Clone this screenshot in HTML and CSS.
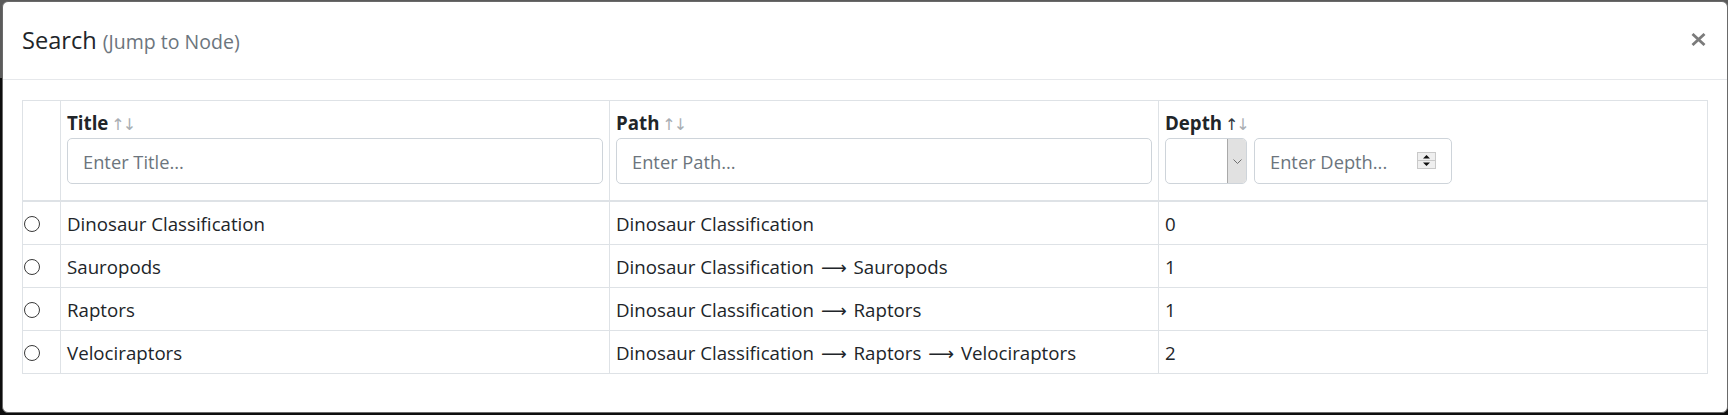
FILE: index.html
```html
<!DOCTYPE html>
<html lang="en">
<head>
<meta charset="utf-8">
<title>Search (Jump to Node)</title>
<link rel="stylesheet" href="styles.css">
</head>
<body>
<div class="modal">
  <div class="modal-header">
    <h5 class="modal-title">Search <small class="muted">(Jump to Node)</small></h5>
    <button class="close" type="button" aria-label="Close">
      <svg width="15" height="13" viewBox="0 0 15 13"><path d="M1.5 1 L13.5 12 M13.5 1 L1.5 12" stroke="#7b7b7b" stroke-width="2.8" stroke-linecap="butt"/></svg>
    </button>
  </div>
  <div class="modal-body">
    <table class="grid">
      <colgroup><col class="c-sel"><col><col><col></colgroup>
      <thead>
        <tr>
          <th></th>
          <th>
            <div class="th-label">Title <span class="sort"><span>↑</span><span>↓</span></span></div>
            <input class="form-control" type="text" placeholder="Enter Title...">
          </th>
          <th>
            <div class="th-label">Path <span class="sort"><span>↑</span><span>↓</span></span></div>
            <input class="form-control" type="text" placeholder="Enter Path...">
          </th>
          <th>
            <div class="th-label">Depth <span class="sort"><span class="on">↑</span><span>↓</span></span></div>
            <div class="depth-filter">
              <div class="select-wrap">
                <select class="select"><option></option></select>
                <span class="select-btn"><svg width="9" height="5" viewBox="0 0 9 5"><path d="M0.5 0.5 L4.5 4.5 L8.5 0.5" fill="none" stroke="#6f6f6f" stroke-width="1"/></svg></span>
              </div>
              <div class="num-wrap">
                <input class="form-control num" type="text" placeholder="Enter Depth...">
                <span class="spinner"><svg width="19" height="17" viewBox="0 0 19 17"><rect x="0.5" y="0.5" width="18" height="16" fill="#efefef" stroke="#c9c9c9"/><line x1="1" y1="8.5" x2="18" y2="8.5" stroke="#c9c9c9"/><path d="M9.5 3 L13 6.5 L6 6.5 Z" fill="#111"/><path d="M6 10.5 L13 10.5 L9.5 14 Z" fill="#111"/></svg></span>
              </div>
            </div>
          </th>
        </tr>
      </thead>
      <tbody>
        <tr>
          <td class="sel"><input class="radio" type="radio" name="node"></td>
          <td>Dinosaur Classification</td>
          <td>Dinosaur Classification</td>
          <td>0</td>
        </tr>
        <tr>
          <td class="sel"><input class="radio" type="radio" name="node"></td>
          <td>Sauropods</td>
          <td>Dinosaur Classification <span class="arr">⟶</span> Sauropods</td>
          <td>1</td>
        </tr>
        <tr>
          <td class="sel"><input class="radio" type="radio" name="node"></td>
          <td>Raptors</td>
          <td>Dinosaur Classification <span class="arr">⟶</span> Raptors</td>
          <td>1</td>
        </tr>
        <tr>
          <td class="sel"><input class="radio" type="radio" name="node"></td>
          <td>Velociraptors</td>
          <td>Dinosaur Classification <span class="arr">⟶</span> Raptors <span class="arr">⟶</span> Velociraptors</td>
          <td>2</td>
        </tr>
      </tbody>
    </table>
  </div>
</div>
</body>
</html>
```
FILE: styles.css
```css
html, body {
  margin: 0;
  height: 415px;
  overflow: hidden;
}
body {
  padding: 1px 0 0 2px;
  box-sizing: border-box;
  background: linear-gradient(#5b5b5b 0 78px, #0e0e0e 78px);
  font-family: "Open Sans", "Noto Sans", "DejaVu Sans", sans-serif;
  color: #212529;
}
.modal {
  width: 1726px;
  height: 412px;
  box-sizing: border-box;
  background: #fff;
  border: 1px solid #6a6a6a;
  border-radius: 6px;
}
.modal-header {
  height: 78px;
  box-sizing: border-box;
  border-bottom: 1px solid #e6e8eb;
  display: flex;
  align-items: center;
  justify-content: space-between;
  padding: 0 20px 0 19px;
}
.modal-title {
  margin: 0;
  font-size: 23.6px;
  font-weight: 400;
  line-height: 1.5;
}
.muted {
  font-size: 19.5px;
  color: #6c757d;
}
.close {
  border: 0;
  background: transparent;
  padding: 0;
  margin: 0 1px 2px 0;
  display: flex;
  cursor: pointer;
}
.modal-body {
  padding: 20px 19px 0;
}
.grid {
  width: 100%;
  border-collapse: collapse;
  table-layout: fixed;
  font-size: 18.7px;
}
.c-sel { width: 38px; }
.grid th, .grid td {
  border: 1px solid #dee2e6;
  text-align: left;
}
.grid th {
  vertical-align: top;
  padding: 7px 6px 16px;
  border-bottom: 2px solid #dee2e6;
  font-weight: 700;
}
.th-label {
  line-height: 30px;
  height: 30px;
}
.sort {
  font-weight: 400;
  font-size: 16px;
  color: #a9aeb3;
  letter-spacing: -2px;
  margin-left: -2px;
}
.sort .on { color: #343a40; }
.grid td {
  padding: 7px 6px 5px;
  line-height: 30px;
  white-space: nowrap;
}
.grid td.sel {
  padding: 0 0 0 1px;
  vertical-align: middle;
}
.radio {
  appearance: none;
  -webkit-appearance: none;
  width: 16px;
  height: 16px;
  margin: 2px 0 0;
  border: 1px solid #3a3a3a;
  border-radius: 50%;
  background: #fff;
  display: block;
}
.arr {
  font-family: "DejaVu Sans", sans-serif;
  font-size: 18px;
  line-height: 1;
  margin: 0 2px;
}
.form-control {
  display: block;
  width: 100%;
  height: 46px;
  box-sizing: border-box;
  padding: 0 15px;
  border: 1px solid #ced4da;
  border-radius: 5px;
  font-family: inherit;
  font-size: 18.3px;
  color: #495057;
  background: #fff;
  outline: none;
}
.form-control::placeholder { color: #6c757d; }
.depth-filter {
  display: flex;
  gap: 7px;
}
.select-wrap {
  position: relative;
  width: 82px;
  height: 46px;
}
.select {
  appearance: none;
  -webkit-appearance: none;
  width: 100%;
  height: 100%;
  box-sizing: border-box;
  border: 1px solid #ced4da;
  border-radius: 5px;
  background: #fff;
}
.select-btn {
  position: absolute;
  top: 1px;
  right: 1px;
  bottom: 1px;
  width: 18px;
  background: #e1e1e1;
  border-left: 1px solid #a9a9a9;
  border-radius: 0 4px 4px 0;
  display: flex;
  align-items: center;
  justify-content: center;
  padding-top: 1px;
}
.num-wrap {
  position: relative;
  width: 198px;
}
.spinner {
  position: absolute;
  top: 14px;
  right: 16px;
  display: flex;
}
```
